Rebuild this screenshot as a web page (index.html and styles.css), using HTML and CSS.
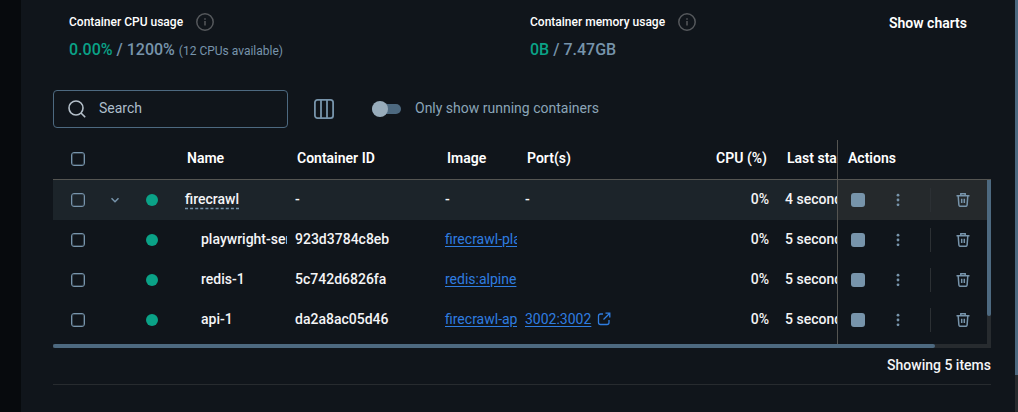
FILE: index.html
```html
<!DOCTYPE html>
<html lang="en">
<head>
<meta charset="utf-8">
<meta name="viewport" content="width=device-width, initial-scale=1">
<title>Containers</title>
<link rel="stylesheet" href="styles.css">
</head>
<body>
<svg class="sprite" aria-hidden="true">
  <symbol id="info" viewBox="0 0 18 18"><circle cx="9" cy="9" r="8.2" fill="none" stroke="currentColor" stroke-width="1.5"/><path d="M9 8v4.500M9 5.300v1.500" stroke="currentColor" stroke-width="1.5"/></symbol>
  <symbol id="dots" viewBox="0 0 14 14"><g fill="currentColor"><circle cx="7" cy="2.2" r="1.4"/><circle cx="7" cy="7" r="1.4"/><circle cx="7" cy="11.8" r="1.4"/></g></symbol>
  <symbol id="trash" viewBox="0 0 14 14"><path d="M.5 2.700h13M4.800 2.500V.8h4.400v1.700M2.200 3l.7 9c.1.9.5 1.300 1.300 1.300h5.600c.8 0 1.200-.4 1.300-1.300l.7-9M5.700 5.800v4.200M8.300 5.800v4.200" fill="none" stroke="currentColor" stroke-width="1.5"/></symbol>
</svg>
<div class="app">
  <aside class="sidebar"></aside>
  <main class="content">
    <section class="stats">
      <div class="stat">
        <div class="stat-title">Container CPU usage <svg class="info"><use href="#info"/></svg></div>
        <div class="stat-value"><span class="used">0.00%</span> / 1200% <small>(12 CPUs available)</small></div>
      </div>
      <div class="stat">
        <div class="stat-title">Container memory usage <svg class="info"><use href="#info"/></svg></div>
        <div class="stat-value"><span class="used">0B</span> / 7.47GB</div>
      </div>
      <button class="charts" type="button">Show charts</button>
    </section>

    <div class="toolbar">
      <label class="search">
        <svg viewBox="0 0 18 18"><circle cx="8" cy="8" r="7" fill="none" stroke="currentColor" stroke-width="1.6"/><path d="M13 13l4.200 4.200" stroke="currentColor" stroke-width="1.6"/></svg>
        <input type="text" placeholder="Search" aria-label="Search">
      </label>
      <button class="columns" type="button" aria-label="Choose columns">
        <svg viewBox="0 0 20 20"><g fill="none" stroke="currentColor" stroke-width="1.8"><rect x=".9" y=".9" width="18.2" height="18.2" rx="2.600"/><path d="M7 1v18M13 1v18"/></g></svg>
      </button>
      <label class="toggle"><input type="checkbox" role="switch"><span>Only show running containers</span></label>
    </div>

    <div class="grid">
      <div class="viewport">
        <table class="containers">
          <colgroup><col class="c-check"><col class="c-expand"><col class="c-status"><col class="c-name"><col class="c-id"><col class="c-image"><col class="c-ports"><col class="c-cpu"><col class="c-last"><col class="c-actions"></colgroup>
          <thead>
            <tr>
              <th class="center"><input class="box" type="checkbox" aria-label="Select all"></th><th></th><th></th>
              <th>Name</th><th>Container ID</th><th>Image</th><th>Port(s)</th><th class="num">CPU (%)</th><th>Last started</th><th class="sticky">Actions</th>
            </tr>
          </thead>
          <tbody>
            <tr class="group">
              <td class="center"><input class="box" type="checkbox" aria-label="Select firecrawl"></td>
              <td class="center"><button class="icon expand" type="button" aria-label="Collapse firecrawl"><svg viewBox="0 0 8 8"><path d="M.5 2.200L4 5.700l3.500-3.500" fill="none" stroke="currentColor" stroke-width="1.5"/></svg></button></td>
              <td class="center"><span class="status"></span></td>
              <td><span class="group-name">firecrawl</span></td><td>-</td><td>-</td><td>-</td><td class="num">0%</td><td>4 seconds ago</td>
              <td class="sticky"><div class="actions"><button class="icon" type="button" aria-label="Stop"><span class="stop"></span></button><button class="icon" type="button" aria-label="More"><svg><use href="#dots"/></svg></button><span class="rule"></span><button class="icon" type="button" aria-label="Delete"><svg><use href="#trash"/></svg></button></div></td>
            </tr>
            <tr>
              <td class="center"><input class="box" type="checkbox" aria-label="Select playwright-service"></td><td></td>
              <td class="center"><span class="status"></span></td>
              <td class="child">playwright-service-1</td><td>923d3784c8eb</td><td><a href="#">firecrawl-playwright-service</a></td><td></td><td class="num">0%</td><td>5 seconds ago</td>
              <td class="sticky"><div class="actions"><button class="icon" type="button" aria-label="Stop"><span class="stop"></span></button><button class="icon" type="button" aria-label="More"><svg><use href="#dots"/></svg></button><span class="rule"></span><button class="icon" type="button" aria-label="Delete"><svg><use href="#trash"/></svg></button></div></td>
            </tr>
            <tr>
              <td class="center"><input class="box" type="checkbox" aria-label="Select redis-1"></td><td></td>
              <td class="center"><span class="status"></span></td>
              <td class="child">redis-1</td><td>5c742d6826fa</td><td><a href="#">redis:alpine</a></td><td></td><td class="num">0%</td><td>5 seconds ago</td>
              <td class="sticky"><div class="actions"><button class="icon" type="button" aria-label="Stop"><span class="stop"></span></button><button class="icon" type="button" aria-label="More"><svg><use href="#dots"/></svg></button><span class="rule"></span><button class="icon" type="button" aria-label="Delete"><svg><use href="#trash"/></svg></button></div></td>
            </tr>
            <tr>
              <td class="center"><input class="box" type="checkbox" aria-label="Select api-1"></td><td></td>
              <td class="center"><span class="status"></span></td>
              <td class="child">api-1</td><td>da2a8ac05d46</td><td><a href="#">firecrawl-api</a></td>
              <td><a class="port" href="#"><span>3002:3002</span><svg viewBox="0 0 14 14"><path d="M6 2H3.500Q1.500 2 1.500 4v6.500q0 2 2 2H10q2 0 2-2V8M8.500 1.200h4.300v4.300M12.500 1.500L6.500 7.500" fill="none" stroke="currentColor" stroke-width="1.300"/></svg></a></td>
              <td class="num">0%</td><td>5 seconds ago</td>
              <td class="sticky"><div class="actions"><button class="icon" type="button" aria-label="Stop"><span class="stop"></span></button><button class="icon" type="button" aria-label="More"><svg><use href="#dots"/></svg></button><span class="rule"></span><button class="icon" type="button" aria-label="Delete"><svg><use href="#trash"/></svg></button></div></td>
            </tr>
            <tr class="tail"><td colspan="9"></td><td class="sticky"></td></tr>
          </tbody>
        </table>
      </div>
      <div class="scroll-y"><div class="thumb-y"></div></div>
      <div class="scroll-x"><div class="thumb-x"></div></div>
    </div>
    <footer class="summary">Showing 5 items</footer>
  </main>
  <div class="page-scroll"><div class="page-thumb"></div></div>
</div>
</body>
</html>
```
FILE: styles.css
```css
* { box-sizing: border-box; }

body {
  margin: 0;
  background: #10151b;
  color: #f4f4f6;
  font: 500 14px/20px Roboto, sans-serif;
}

button {
  padding: 0;
  border: 0;
  background: none;
  color: inherit;
  font: inherit;
}

svg { display: block; }
.sprite { position: absolute; width: 0; height: 0; }

.app { display: flex; min-height: 100vh; }
.sidebar { flex: 0 0 21px; background: #070a0d; }
.content { flex: 1; min-width: 0; padding: 12px 24px 24px 32px; }

.page-scroll { flex: 0 0 3px; background: #272b2f; }
.page-thumb { height: 91%; background: #4d6980; }

/* Usage summary */
.stats {
  position: relative;
  display: grid;
  grid-template-columns: 1fr 1fr;
  padding-left: 16px;
}
.stat-title { display: flex; align-items: center; gap: 13px; font-size: 12px; color: #fff; }
.info { width: 18px; height: 18px; color: #55585c; }
.stat-value { margin-top: 6px; font-size: 16px; line-height: 24px; color: #7794ab; }
.stat-value small { font-size: 12px; font-weight: 400; }
.used { color: #0aa287; }
.charts { position: absolute; top: 0; right: 24px; line-height: 22px; font-weight: 600; color: #fff; }

/* Filters */
.toolbar { display: flex; align-items: center; margin-top: 27px; }
.search {
  display: flex;
  align-items: center;
  gap: 13px;
  width: 235px;
  height: 38px;
  padding: 0 14px;
  border: 1px solid #4d6980;
  border-radius: 4px;
  color: #b5c0ca;
}
.search svg { flex: none; width: 18px; height: 18px; }
.search input {
  width: 100%;
  min-width: 0;
  padding: 0 0 2px;
  border: 0;
  outline: 0;
  background: none;
  color: inherit;
  font: 400 14px/20px Roboto, sans-serif;
}
.search input::placeholder { color: #adbecb; opacity: 1; }
.columns { margin-left: 26px; color: #7794ab; }
.columns svg { width: 20px; height: 20px; }
.toggle { display: flex; align-items: center; gap: 14px; margin-left: 38px; font-weight: 400; color: #8ba5b8; }
.toggle span { padding-bottom: 2px; }
.toggle input {
  appearance: none;
  display: flex;
  align-items: center;
  width: 29px;
  height: 10px;
  margin: 0;
  border-radius: 5px;
  background: #4d6980;
}
.toggle input::before { content: ""; width: 16px; height: 16px; border-radius: 50%; background: #98acbb; }

/* Container table */
.grid { position: relative; margin-top: 12px; }
.viewport { overflow: hidden; }
.containers { width: 100%; min-width: 993px; table-layout: fixed; border-spacing: 0; }
.c-check, .c-status { width: 50px; }
.c-expand { width: 24px; }
.c-name { width: 110px; }
.c-id { width: 150px; }
.c-image { width: 80px; }
.c-cpu { width: 80px; }
.c-last { width: 115px; }
.c-actions { width: 154px; }

th, td { height: 40px; overflow: hidden; white-space: nowrap; text-align: left; }
th { padding: 0 10px 3px; border-bottom: 1px solid #555552; font-weight: 600; color: #fff; }
td { padding: 0 0 2px 8px; }
td.center { padding: 0; }
th.center { padding: 0 0 2px; }
.num { text-align: right; }
td.num { padding-right: 8px; }
.child { padding-left: 24px; }
.group td { background: #1c242a; }

.sticky { position: sticky; right: 0; border-left: 1px solid #555552; background: #10151b; }
td.sticky { padding: 0; }
.group .sticky { background: #25292c; }
.tail td { height: 4px; padding: 0; }

.box {
  appearance: none;
  display: block;
  width: 14px;
  height: 14px;
  margin: 0 auto;
  border: 1px solid #7794ab;
  border-radius: 3px;
  box-shadow: inset 0 0 0 1px #35434f;
}
.icon { display: flex; align-items: center; justify-content: center; width: 40px; height: 40px; color: #7794ab; }
.icon svg { width: 14px; height: 14px; }
.icon.expand { width: 24px; }
.icon.expand svg { width: 8px; height: 8px; }
.status { display: block; width: 12px; height: 12px; margin: 0 auto; border-radius: 50%; background: #0aa287; }
.group-name { text-decoration: underline dashed #7794ab; text-underline-offset: 4px; }

a { color: #2f7de0; font-weight: 400; text-underline-offset: 2px; }
.port { display: inline-flex; align-items: center; gap: 6px; text-decoration: none; }
.port span { text-decoration: underline; }
.port svg { width: 14px; height: 14px; }

.actions { display: flex; align-items: center; }
.stop { width: 14px; height: 14px; border-radius: 3px; background: #7794ab; }
.rule { width: 1px; height: 24px; margin: 0 12px; background: #2c3034; }

.scroll-y { position: absolute; top: 40px; right: 0; bottom: 4px; width: 4px; background: #272b2f; }
.thumb-y { height: 83%; border-radius: 0 0 2px 2px; background: #4d6980; }
.scroll-x { height: 4px; background: #272b2f; }
.thumb-x { width: 94%; height: 4px; border-radius: 2px; background: #4d6980; }

.summary { padding: 7px 0 9px; border-bottom: 1px solid #272b2f; text-align: right; font-weight: 500; }
```
